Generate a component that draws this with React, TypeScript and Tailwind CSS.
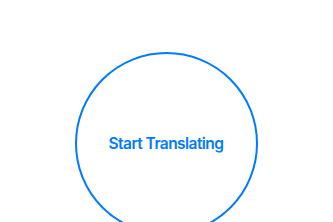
export default function App() {
  return (
    <div className="w-[333px] h-[222px] bg-white overflow-hidden flex flex-col items-center pt-[52px]">
      <button className="shrink-0 ml-[-1px] w-[183px] h-[183px] rounded-full border-2 border-[#007aff] flex items-center justify-center text-[#007aff] text-[15.5px] font-semibold tracking-[-0.55px]" style={{ fontFamily: 'Inter, "Noto Sans", sans-serif' }}>
        Start Translating
      </button>
    </div>
  );
}
